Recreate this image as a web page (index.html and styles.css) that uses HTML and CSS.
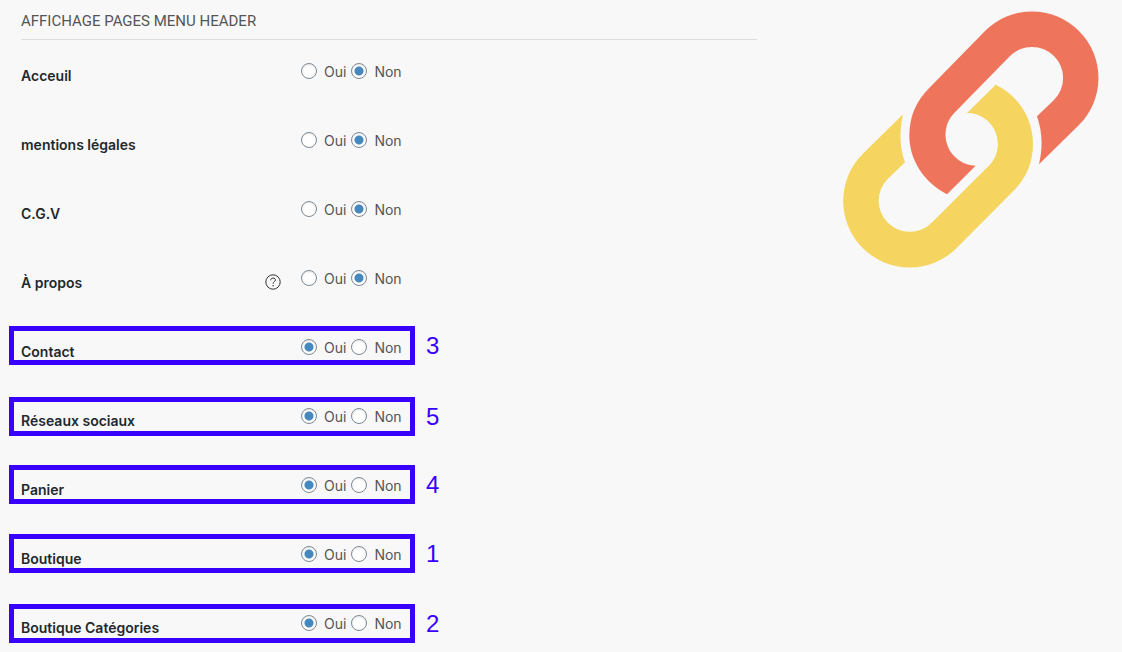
FILE: index.html
```html
<!DOCTYPE html>
<html lang="fr">
<head>
<meta charset="utf-8">
<meta name="viewport" content="width=device-width, initial-scale=1">
<title>Affichage pages menu header</title>
<link rel="stylesheet" href="styles.css">
</head>
<body>
<main class="page">
  <form class="settings">
    <h1 class="title">AFFICHAGE PAGES MENU HEADER</h1>
    <fieldset class="row">
      <legend class="name">Acceuil</legend>
      <div class="choices">
        <label class="choice"><input type="radio" name="accueil"><span>Oui</span></label>
        <label class="choice"><input type="radio" name="accueil" checked><span>Non</span></label>
      </div>
    </fieldset>
    <fieldset class="row">
      <legend class="name">mentions légales</legend>
      <div class="choices">
        <label class="choice"><input type="radio" name="mentions"><span>Oui</span></label>
        <label class="choice"><input type="radio" name="mentions" checked><span>Non</span></label>
      </div>
    </fieldset>
    <fieldset class="row">
      <legend class="name">C.G.V</legend>
      <div class="choices">
        <label class="choice"><input type="radio" name="cgv"><span>Oui</span></label>
        <label class="choice"><input type="radio" name="cgv" checked><span>Non</span></label>
      </div>
    </fieldset>
    <fieldset class="row">
      <legend class="name">À propos</legend>
      <button class="help" type="button" aria-label="Aide">
        <svg width="16" height="16" viewBox="0 0 16 16" fill="none" stroke="#333"><circle cx="8" cy="8" r="7.2"/><path d="M5.700 6.300C5.700 3.300 10.400 3.400 10.400 6C10.400 7.600 8.100 7.800 8.100 9.800" stroke-width="1"/><path d="M8.100 11v1.300" stroke-width="1.200"/></svg>
      </button>
      <div class="choices">
        <label class="choice"><input type="radio" name="apropos"><span>Oui</span></label>
        <label class="choice"><input type="radio" name="apropos" checked><span>Non</span></label>
      </div>
    </fieldset>
    <fieldset class="row">
      <legend class="name">Contact</legend>
      <div class="choices">
        <label class="choice"><input type="radio" name="contact" checked><span>Oui</span></label>
        <label class="choice"><input type="radio" name="contact"><span>Non</span></label>
      </div>
    </fieldset>
    <fieldset class="row">
      <legend class="name">Réseaux sociaux</legend>
      <div class="choices">
        <label class="choice"><input type="radio" name="reseaux" checked><span>Oui</span></label>
        <label class="choice"><input type="radio" name="reseaux"><span>Non</span></label>
      </div>
    </fieldset>
    <fieldset class="row">
      <legend class="name">Panier</legend>
      <div class="choices">
        <label class="choice"><input type="radio" name="panier" checked><span>Oui</span></label>
        <label class="choice"><input type="radio" name="panier"><span>Non</span></label>
      </div>
    </fieldset>
    <fieldset class="row">
      <legend class="name">Boutique</legend>
      <div class="choices">
        <label class="choice"><input type="radio" name="boutique" checked><span>Oui</span></label>
        <label class="choice"><input type="radio" name="boutique"><span>Non</span></label>
      </div>
    </fieldset>
    <fieldset class="row">
      <legend class="name">Boutique Catégories</legend>
      <div class="choices">
        <label class="choice"><input type="radio" name="categories" checked><span>Oui</span></label>
        <label class="choice"><input type="radio" name="categories"><span>Non</span></label>
      </div>
    </fieldset>
  </form>
  <svg class="chain" viewBox="0 0 768 770" aria-hidden="true">
    <g transform="translate(-39 -32)">
      <path fill="#f5d560" d="M497 253C565 285 609 355 609 431A199 199 0 0 1 550 572L380 743A199 199 0 0 1 98 461L219 342C208 392 208 440 225 486L173 536A92 92 0 0 0 305 667L475 498A93 93 0 0 0 411 338Z"/>
      <path fill="#ee755c" d="M351 582C280 545 238 478 238 405A200 200 0 0 1 297 264L465 92A199 199 0 0 1 747 374L627 492C639 440 637 395 621 348L672 299A93 93 0 0 0 540 167L372 339A93 93 0 0 0 437 496Z"/>
    </g>
  </svg>
  <div class="mark mark-contact"><span>3</span></div>
  <div class="mark mark-social"><span>5</span></div>
  <div class="mark mark-cart"><span>4</span></div>
  <div class="mark mark-shop"><span>1</span></div>
  <div class="mark mark-categories"><span>2</span></div>
</main>
</body>
</html>
```

FILE: styles.css
```css
* {
  box-sizing: border-box;
}

body {
  margin: 0;
  background: #f8f8f8;
  color: #555;
  font: 14px/20px Inter, "Liberation Sans", sans-serif;
}

.page {
  position: relative;
  display: flex;
  align-items: flex-start;
  justify-content: space-between;
  gap: 86px;
  padding: 11px 23px 0 21px;
}

.settings {
  flex: 1;
}

.title {
  margin: 0 0 22px;
  padding-bottom: 8px;
  border-bottom: 1px solid #dedede;
  font-family: Roboto, Inter, sans-serif;
  font-size: 15px;
  font-weight: 400;
}

.row {
  display: flex;
  margin: 0;
  padding: 0 0 49px;
  border: 0;
  min-width: 0;
}

.name {
  float: left;
  width: 244px;
  padding: 4px 0 0;
  margin-bottom: -4px;
  color: #23282d;
  font-weight: 600;
}

.help {
  width: 16px;
  height: 16px;
  margin: 5px 0 -1px;
  padding: 0;
  border: 0;
  background: none;
}

.help svg {
  display: block;
}

.choices {
  display: flex;
  gap: 5px;
  margin-left: auto;
  width: 456px;
}

.choice {
  display: flex;
  gap: 7px;
}

.choice input {
  appearance: none;
  width: 16px;
  height: 16px;
  margin: 1px 0 0;
  border: 1px solid #7e8993;
  border-radius: 50%;
  background: #fff;
  box-shadow: inset 0 1px 2px rgba(0, 0, 0, 0.1);
}

.choice input:checked {
  background: radial-gradient(circle, #4488bf 4px, #fff 5px);
}

.chain {
  flex: none;
  width: 256px;
}

.mark {
  position: absolute;
  left: 9px;
  width: 406px;
  height: 39px;
  border: 5px solid #3700ff;
  color: #3700ff;
  font: 24px/29px "Liberation Sans", sans-serif;
  pointer-events: none;
}

.mark span {
  position: absolute;
  left: 100%;
  margin-left: 16px;
}

.mark-contact {
  top: 326px;
}

.mark-social {
  top: 397px;
}

.mark-cart {
  top: 465px;
}

.mark-shop {
  top: 534px;
}

.mark-categories {
  top: 604px;
}
```
